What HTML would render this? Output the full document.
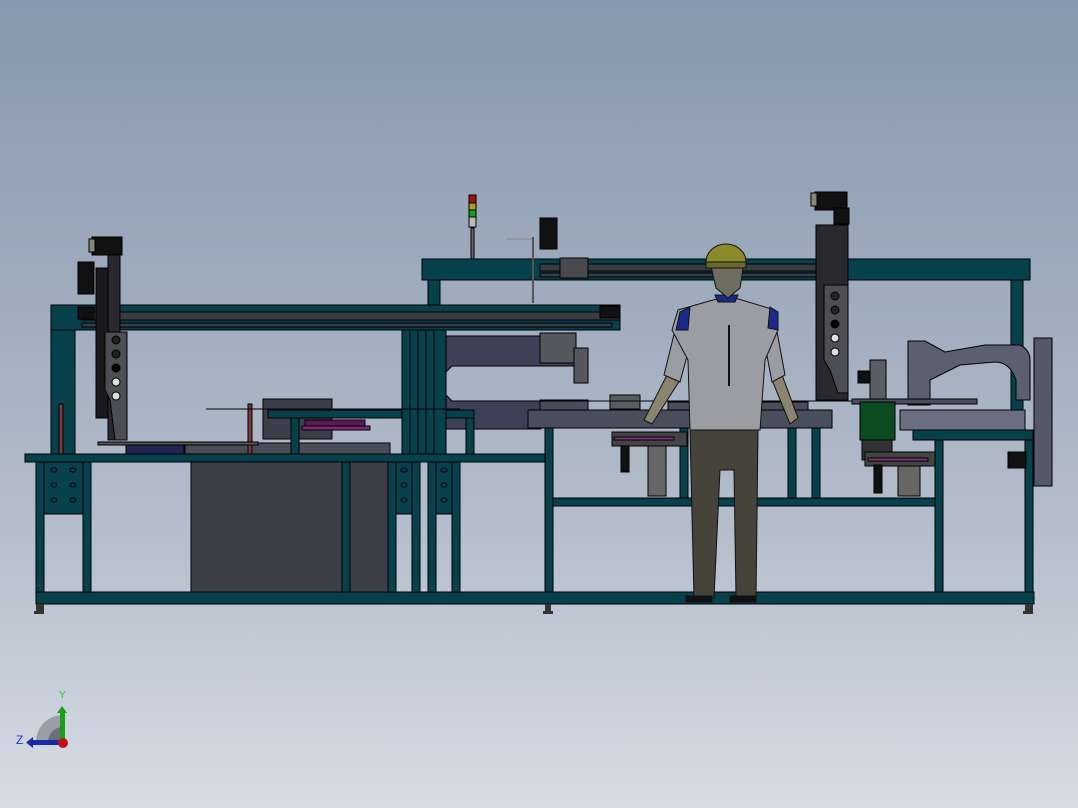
<!DOCTYPE html>
<html><head><meta charset="utf-8"><style>
html,body{margin:0;padding:0;width:1078px;height:808px;overflow:hidden}
body{background:linear-gradient(#8798ad 0%,#9eabbd 35%,#b4bdcb 65%,#d6dce5 100%)}
svg{position:absolute;left:0;top:0}
</style></head><body>
<svg width="1078" height="808" viewBox="0 0 1078 808" xmlns="http://www.w3.org/2000/svg" font-family="Liberation Sans, sans-serif">
<g stroke="#000" stroke-width="1">
<rect x="191" y="454" width="151" height="138" fill="#3c3f4a"/>
<rect x="350" y="454" width="38" height="138" fill="#3c3f4a"/>
<rect x="263" y="399" width="69" height="40" fill="#3c3f4a"/>
<rect x="185" y="443" width="205" height="11" fill="#4a4d58"/>
<path d="M446 336 L576 336 L576 366 L452 366 L446 372 L446 395 L452 401 L541 401 L541 429 L446 429 Z" fill="#3e4156"/>
<rect x="540" y="333" width="36" height="30" fill="#56585e"/>
<rect x="574" y="348" width="14" height="35" fill="#56585e"/>
<rect x="528" y="410" width="304" height="18" fill="#4a4e5c"/>
<rect x="540" y="400" width="48" height="10" fill="#4a4e5c"/>
<rect x="610" y="395" width="30" height="14" fill="#5a5c62"/>
<rect x="668" y="402" width="140" height="8" fill="#4a4e5c"/>
<line x1="496" y1="401" x2="960" y2="401"/>
<g fill="#07414b">
<rect x="25" y="454" width="520" height="8"/>
<rect x="36" y="592" width="998" height="12"/>
<rect x="36" y="462" width="8" height="130"/>
<rect x="44" y="462" width="39" height="52"/>
<rect x="83" y="462" width="8" height="130"/>
<rect x="342" y="462" width="8" height="130"/>
<rect x="388" y="462" width="8" height="130"/>
<rect x="396" y="462" width="16" height="52"/>
<rect x="412" y="462" width="8" height="130"/>
<rect x="428" y="462" width="8" height="130"/>
<rect x="436" y="462" width="16" height="52"/>
<rect x="452" y="462" width="8" height="130"/>
<rect x="268" y="410" width="206" height="8"/>
<rect x="291" y="418" width="8" height="36"/>
<rect x="466" y="418" width="8" height="36"/>
<rect x="402" y="330" width="44" height="124"/>
<rect x="51" y="305" width="24" height="149"/>
<rect x="545" y="428" width="8" height="164"/>
<rect x="553" y="498" width="382" height="8"/>
<rect x="680" y="428" width="8" height="70"/>
<rect x="788" y="428" width="8" height="70"/>
<rect x="812" y="428" width="8" height="70"/>
<rect x="935" y="440" width="8" height="152"/>
<rect x="1025" y="440" width="8" height="152"/>
<rect x="913" y="430" width="120" height="10"/>
<rect x="422" y="259" width="608" height="21"/>
<rect x="428" y="280" width="12" height="25"/>
<rect x="1011" y="280" width="12" height="150"/>
<rect x="51" y="305" width="569" height="25"/>
</g>
<line x1="410" y1="330" x2="410" y2="454"/><line x1="418" y1="330" x2="418" y2="454"/><line x1="426" y1="330" x2="426" y2="454"/><line x1="434" y1="330" x2="434" y2="454"/>
<rect x="82" y="312" width="538" height="8" fill="#3a3c44"/>
<rect x="82" y="323" width="530" height="4" fill="#3a3c44"/>
<rect x="540" y="264" width="300" height="7" fill="#3a3c44"/>
<rect x="540" y="273" width="300" height="4" fill="#3a3c44"/>
<rect x="560" y="258" width="28" height="20" fill="#4a4a4e"/>
<rect x="600" y="306" width="20" height="12" fill="#111"/>
<g fill="none" stroke-width="1">
<ellipse cx="54" cy="470" rx="3" ry="2"/><ellipse cx="73" cy="470" rx="3" ry="2"/>
<ellipse cx="54" cy="485" rx="3" ry="2"/><ellipse cx="73" cy="485" rx="3" ry="2"/>
<ellipse cx="54" cy="500" rx="3" ry="2"/><ellipse cx="73" cy="500" rx="3" ry="2"/>
<ellipse cx="404" cy="470" rx="3" ry="2"/><ellipse cx="444" cy="470" rx="3" ry="2"/>
<ellipse cx="404" cy="485" rx="3" ry="2"/><ellipse cx="444" cy="485" rx="3" ry="2"/>
<ellipse cx="404" cy="500" rx="3" ry="2"/><ellipse cx="444" cy="500" rx="3" ry="2"/>
</g>
<rect x="96" y="268" width="12" height="150" fill="#1a1a1c"/>
<rect x="108" y="240" width="12" height="200" fill="#2a2a2e"/>
<path d="M105 332 L127 332 L127 440 L115 440 L110 400 L105 390 Z" fill="#4c4e54"/>
<circle cx="116" cy="340" r="4" fill="#222"/><circle cx="116" cy="354" r="4" fill="#222"/><circle cx="116" cy="368" r="4" fill="#000"/>
<circle cx="116" cy="382" r="4" fill="#ddd"/><circle cx="116" cy="396" r="4" fill="#ddd"/>
<rect x="92" y="237" width="30" height="18" fill="#111"/><rect x="89" y="239" width="6" height="13" fill="#887"/>
<rect x="78" y="262" width="16" height="32" fill="#111"/>
<rect x="78" y="307" width="16" height="12" fill="#111"/>
<rect x="59" y="404" width="4" height="50" fill="#7a3a3a"/>
<rect x="248" y="404" width="4" height="50" fill="#7a3a3a"/>
<rect x="126" y="445" width="58" height="9" fill="#1f2550"/>
<rect x="98" y="442" width="160" height="3" fill="#555"/>
<line x1="206" y1="409" x2="460" y2="409"/>
<rect x="305" y="420" width="60" height="6" fill="#5a1a50"/>
<rect x="302" y="426" width="68" height="4" fill="#7a2a70"/>
<rect x="471" y="228" width="3" height="31" fill="#666"/>
<rect x="469" y="195" width="7" height="8" fill="#a01010"/>
<rect x="469" y="203" width="7" height="7" fill="#b0a020"/>
<rect x="469" y="210" width="7" height="7" fill="#10a010"/>
<rect x="469" y="217" width="7" height="10" fill="#bbb"/>
<rect x="540" y="218" width="17" height="31" fill="#111"/>
<line x1="507" y1="239" x2="532" y2="239" stroke="#888"/>
<line x1="533" y1="237" x2="533" y2="303" stroke="#555" stroke-width="2"/>
<rect x="816" y="225" width="32" height="175" fill="#2a2a2e"/>
<path d="M824 285 L848 285 L848 393 L838 393 L830 370 L824 360 Z" fill="#4c4e54"/>
<circle cx="835" cy="296" r="4" fill="#222"/><circle cx="835" cy="310" r="4" fill="#222"/><circle cx="835" cy="324" r="4" fill="#000"/>
<circle cx="835" cy="338" r="4" fill="#ddd"/><circle cx="835" cy="352" r="4" fill="#ddd"/>
<rect x="815" y="192" width="32" height="18" fill="#111"/><rect x="811" y="193" width="6" height="13" fill="#887"/>
<rect x="834" y="208" width="15" height="16" fill="#111"/>
<path d="M908 341 L925 341 L945 352 L985 345 L1020 345 Q1030 350 1030 360 L1030 400 L1016 400 L1016 380 Q1010 362 995 362 L960 365 L930 380 L930 405 L908 405 Z" fill="#5c5f70"/>
<rect x="1034" y="338" width="18" height="148" fill="#55586a"/>
<rect x="870" y="360" width="16" height="40" fill="#5a5c66"/>
<rect x="858" y="371" width="12" height="12" fill="#111"/>
<rect x="852" y="399" width="125" height="5" fill="#4a4e5c"/>
<rect x="900" y="410" width="125" height="20" fill="#6a6e80"/>
<rect x="860" y="402" width="35" height="38" fill="#0c4a20"/>
<rect x="862" y="440" width="30" height="20" fill="#333"/>
<rect x="865" y="452" width="70" height="14" fill="#444"/>
<rect x="868" y="458" width="60" height="3" fill="#7a3a7a"/>
<rect x="898" y="466" width="22" height="30" fill="#666"/>
<rect x="1008" y="452" width="18" height="16" fill="#111"/>
<rect x="612" y="432" width="75" height="14" fill="#444"/>
<rect x="614" y="437" width="60" height="3" fill="#7a3a7a"/>
<rect x="621" y="446" width="8" height="26" fill="#111"/>
<rect x="648" y="446" width="18" height="50" fill="#666"/>
<rect x="874" y="465" width="8" height="28" fill="#111"/>
</g>
<g stroke="#111" stroke-width="1">
<path d="M690 430 L758 430 L756 598 L736 598 L734 470 L720 470 L714 598 L694 598 Z" fill="#45433a"/>
<path d="M686 596 L712 596 L712 602 L686 602 Z" fill="#111"/>
<path d="M730 596 L756 596 L756 602 L730 602 Z" fill="#111"/>
<path d="M667 375 L644 420 L652 424 L680 380 Z" fill="#8a8470"/>
<path d="M782 375 L798 418 L790 424 L772 380 Z" fill="#8a8470"/>
<path d="M680 310 L664 375 L680 382 L690 345 Z" fill="#9c9da3"/>
<path d="M773 310 L785 375 L772 382 L765 345 Z" fill="#9c9da3"/>
<path d="M678 310 L720 298 L735 298 L775 310 L778 330 L765 360 L760 430 L690 430 L688 360 L672 330 Z" fill="#9c9da3"/>
<path d="M680 312 L690 307 L688 330 L676 330 Z" fill="#1a2a8a"/>
<path d="M770 307 L778 312 L778 330 L768 328 Z" fill="#1a2a8a"/>
<path d="M715 295 L738 295 L735 302 L718 302 Z" fill="#1a2a8a"/>
<line x1="729" y1="325" x2="729" y2="386" stroke-width="2"/>
<path d="M710 262 L744 262 L740 288 L728 298 L716 288 Z" fill="#6f6c60"/>
<path d="M706 262 A20 18 0 0 1 746 262 Z" fill="#8c8a2a"/>
<rect x="706" y="262" width="40" height="6" fill="#6a6a30"/>
</g>
<g fill="#333"><rect x="36" y="604" width="8" height="8"/><rect x="545" y="604" width="6" height="8"/><rect x="1025" y="604" width="8" height="8"/>
<rect x="34" y="611" width="10" height="3"/><rect x="543" y="611" width="10" height="3"/><rect x="1023" y="611" width="10" height="3"/></g>
<path d="M36 742 A27 27 0 0 1 63 715 L63 742 Z" fill="#9a9ea6"/>
<path d="M48 742 A15 15 0 0 1 63 727 L63 742 Z" fill="#6c7078"/>
<rect x="60" y="712" width="5" height="30" fill="#18a018"/>
<path d="M57 713 L62 706 L67 713 Z" fill="#18a018"/>
<rect x="32" y="740" width="30" height="5" fill="#1a2aa0"/>
<path d="M33 737 L26 742.5 L33 748 Z" fill="#1a2aa0"/>
<circle cx="63" cy="743" r="5" fill="#c01010"/>
<text x="59" y="698" font-size="10" fill="#20d020">Y</text>
<text x="16" y="744" font-size="12" fill="#2030e0">Z</text>
</svg>
</body></html>
